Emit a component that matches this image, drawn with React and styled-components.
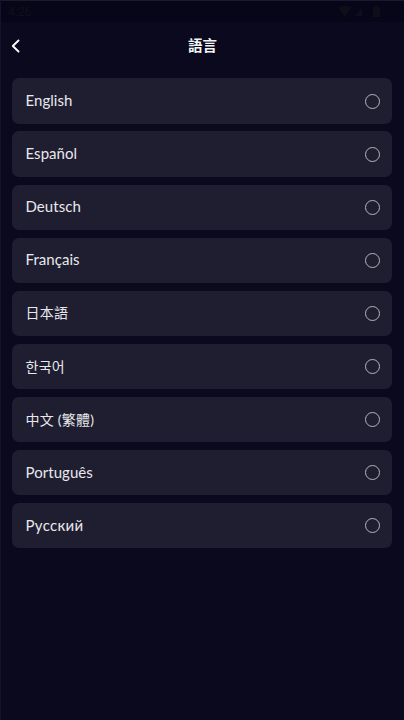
import React from "react";
import styled, { createGlobalStyle } from "styled-components";

const Global = createGlobalStyle`
  html, body { margin: 0; padding: 0; background: #0a091e; }
  #root { width: 404px; height: 720px; }
`;

const Screen = styled.div`
  width: 404px;
  height: 720px;
  overflow: hidden;
  display: flex;
  flex-direction: column;
  background: #0a091e;
  box-sizing: border-box;
  border-top: 1px solid #1b1a2c;
  border-left: 1px solid #14132a;
  font-family: Lato, "Noto Sans CJK TC", "Noto Sans CJK KR", sans-serif;
  color: #f1f1f3;
`;

const StatusBar = styled.div`
  height: 21px;
  flex: none;
  display: flex;
  align-items: center;
  justify-content: space-between;
  padding: 0 24px 0 7px;
  background: #070618;
  color: #100f1b;
  font-family: Roboto, sans-serif;
  font-size: 12px;
`;

const StatusIcons = styled.div`
  display: flex;
  align-items: center;
  gap: 3px;
`;

const BatteryIcon = styled.svg`
  margin-left: 8px;
`;

const Header = styled.header`
  position: relative;
  height: 49px;
  flex: none;
  box-sizing: border-box;
  padding-bottom: 4px;
  display: flex;
  align-items: center;
  justify-content: center;
`;

const BackButton = styled.button`
  position: absolute;
  left: 8px;
  top: 15px;
  width: 14px;
  height: 18px;
  padding: 0;
  border: 0;
  background: none;
  color: #fff;
  display: flex;
`;

const Title = styled.h1`
  margin: 0;
  font-size: 14.5px;
  font-weight: 700;
  color: #f4f4f6;
`;

const List = styled.ul`
  list-style: none;
  margin: 7.4px 12.5px 0 11px;
  padding: 0;
  display: flex;
  flex-direction: column;
  gap: 7.8px;
`;

const Row = styled.li`
  height: 45.3px;
  box-sizing: border-box;
  display: flex;
  align-items: center;
  justify-content: space-between;
  padding: 0 12px 0 13.5px;
  border-radius: 7px;
  background: #1f1e31;
`;

const Label = styled.span`
  font-size: ${(p) => (p.$cjk ? "14px" : "15px")};
  letter-spacing: ${(p) => (p.$tight ? "0.05px" : p.$cjk ? "0.25px" : "0.3px")};
  color: #e8e8ec;
  position: relative;
  top: -1px;
`;

const Radio = styled.span`
  width: 15px;
  height: 15px;
  box-sizing: border-box;
  border: 1.4px solid #b4b4bb;
  border-radius: 50%;
`;

const langs = [
  { name: "English", tight: true },
  { name: "Español", tight: true },
  { name: "Deutsch", tight: true },
  { name: "Français", tight: true },
  { name: "日本語", cjk: true },
  { name: "한국어", cjk: true },
  { name: "中文 (繁體)", cjk: true },
  { name: "Português", tight: true },
  { name: "Русский" },
];

export default function App() {
  return (
    <Screen>
      <Global />
      <StatusBar>
        <span>4:26</span>
        <StatusIcons>
          <svg width="14" height="11" viewBox="0 0 14 11"><path d="M0 1.5C4 -0.5 10 -0.5 14 1.5L7 11z" fill="#0e0d19" /></svg>
          <svg width="7" height="8" viewBox="0 0 7 8"><path d="M7 0V8H0z" fill="#0e0d19" /></svg>
          <BatteryIcon width="7" height="11" viewBox="0 0 7 11"><path d="M2 0h3v1.5h2V11H0V1.5h2z" fill="#0e0d19" /></BatteryIcon>
        </StatusIcons>
      </StatusBar>
      <Header>
        <BackButton aria-label="back">
          <svg width="14" height="18" viewBox="0 0 14 18" fill="none"><path d="M9.5 3.5L3.8 9l5.7 5.5" stroke="currentColor" strokeWidth="1.9" strokeLinecap="round" strokeLinejoin="round" /></svg>
        </BackButton>
        <Title>語言</Title>
      </Header>
      <List>
        {langs.map((l) => (
          <Row key={l.name}>
            <Label $cjk={l.cjk} $tight={l.tight}>{l.name}</Label>
            <Radio />
          </Row>
        ))}
      </List>
    </Screen>
  );
}
